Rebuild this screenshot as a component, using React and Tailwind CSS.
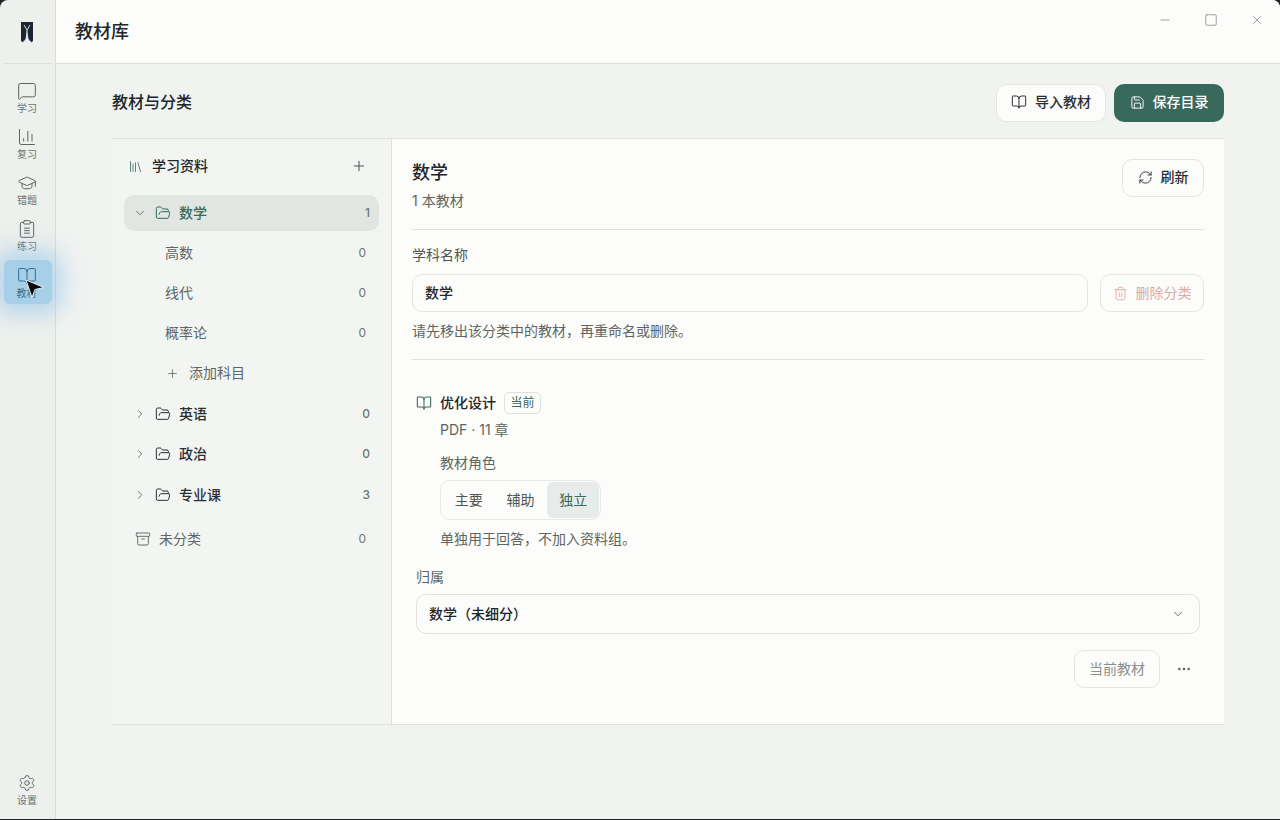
import React from 'react';
import {
  MessageSquare, ChartColumn, GraduationCap, BookOpen, Settings,
  Minus, Square, X, Save, RefreshCw, Trash2, Library, Plus, ChevronDown, ChevronRight,
  FolderOpen, Archive, Ellipsis,
} from 'lucide-react';

// lucide's clipboard icons have dots on the list lines, this one is plain
const ClipboardLines = ({ size = 20, strokeWidth = 1.2 }) => (
  <svg width={size} height={size} viewBox="0 0 24 24" fill="none" stroke="currentColor" strokeWidth={strokeWidth} strokeLinecap="round" strokeLinejoin="round">
    <rect x="8" y="2" width="8" height="4" rx="1" />
    <path d="M16 4h2a2 2 0 0 1 2 2v14a2 2 0 0 1-2 2H6a2 2 0 0 1-2-2V6a2 2 0 0 1 2-2h2" />
    <path d="M9 11h6M9 14h6M9 17h6" />
  </svg>
);

const NAV = [
  { icon: MessageSquare, label: '学习' },
  { icon: ChartColumn, label: '复习' },
  { icon: GraduationCap, label: '错题' },
  { icon: ClipboardLines, label: '练习' },
];

const NavItem = ({ icon: Icon, label }) => (
  <div className="w-12 h-11 mb-[2px] pb-[2px] pr-[1px] flex flex-col items-center justify-center text-[#5d6663]">
    <Icon size={20} strokeWidth={1.2} />
    <span className="text-[10px] leading-3 mt-[1px] text-[#6b7370]">{label}</span>
  </div>
);

const Sidebar = () => (
  <aside className="w-14 shrink-0 bg-[#eef0ed] border-r border-[#d9dcd9] flex flex-col items-center relative">
    <div className="w-[48px] h-16 border-b border-[#dfe2df] pr-[1px] flex items-center justify-center">
      <svg width="16" height="24" viewBox="0 0 16 24">
        <path d="M3 22l3-3M13 22l-3-3" stroke="#a5a5e8" strokeWidth="2" />
        <path d="M2 2h12v19l-1.500 1-3-3-1.500-9-1.500 9-3 3L2 21z" fill="#1e2530" />
        <path d="M5 5l3 5 3-5M8 10v8" stroke="#d8dadb" strokeWidth="1" fill="none" />
      </svg>
    </div>
    <nav className="pt-[12px] flex flex-col items-center">
      {NAV.map(n => <NavItem key={n.label} {...n} />)}
      <div className="relative w-12 h-11 rounded-md bg-[#a8cfe8] shadow-[0_0_22px_10px_rgba(130,190,235,0.5)] pr-[1px] flex flex-col items-center justify-center text-[#2f6f93]">
        <BookOpen size={20} strokeWidth={1.2} />
        <span className="text-[10px] leading-3 mt-[1px] self-start ml-[13px]">教材</span>
        <svg className="absolute left-[20px] top-[18px]" width="24" height="24" viewBox="0 0 24 24">
          <path d="M2 2l18 7.500-9 2-3 8z" fill="#0c0c0c" stroke="#e8f2f8" strokeWidth="1" strokeLinejoin="round" />
        </svg>
      </div>
    </nav>
    <div className="mt-auto mb-[13px] pr-[1px] flex flex-col items-center text-[#5d6663]">
      <Settings size={18} strokeWidth={1.3} />
      <span className="text-[10px] leading-3 mt-[2px] text-[#6b7370]">设置</span>
    </div>
  </aside>
);

const OutlineBtn = ({ className = '', children }) => (
  <button className={`h-[38px] flex items-center justify-center gap-2 rounded-[10px] border border-[#e4e6e3] bg-[#fcfcfa] text-sm font-medium ${className}`}>
    {children}
  </button>
);

const Count = ({ n, className = '' }) => <span className={`ml-auto text-xs text-[#6f7774] ${className}`}>{n}</span>;

const SubRow = ({ label, n }) => (
  <div className="h-10 pl-[41px] pr-[13px] flex items-center text-sm text-[#5e6663]">
    {label}
    <Count n={n} />
  </div>
);

const FolderRow = ({ label, n }) => (
  <div className="h-10 mt-[0.5px] pl-[9px] pr-[9px] flex items-center text-sm font-medium text-[#2b2f33]">
    <ChevronRight size={14} strokeWidth={1.5} className="text-[#5e6663]" />
    <FolderOpen size={16} strokeWidth={1.5} className="mx-2" />
    {label}
    <Count n={n} />
  </div>
);

const Tree = () => (
  <div className="w-[280px] shrink-0 border-r border-[#dfe1de] bg-[#f3f5f3] px-3 pt-[7px]">
    <div className="h-10 pl-[4px] pr-[12px] flex items-center text-sm font-medium text-[#22262a]">
      <Library size={15} strokeWidth={1.3} className="text-[#38695b] mr-[9px]" />
      学习资料
      <Plus size={16} strokeWidth={1.5} className="ml-auto text-[#4b5350]" />
    </div>
    <div className="mt-[9px] h-9 rounded-[10px] bg-[#e1e6e3] pl-[9px] pr-[9px] flex items-center text-sm font-medium text-[#38695b]">
      <ChevronDown size={14} strokeWidth={1.5} className="text-[#5e6663]" />
      <FolderOpen size={16} strokeWidth={1.5} className="mx-2" />
      数学
      <Count n={1} />
    </div>
    <div className="mt-[2px]">
      <SubRow label="高数" n={0} />
      <SubRow label="线代" n={0} />
      <SubRow label="概率论" n={0} />
      <div className="h-10 pl-[42px] flex items-center gap-[10px] text-sm text-[#5e6663]">
        <Plus size={13} strokeWidth={1.5} />
        添加科目
      </div>
    </div>
    <FolderRow label="英语" n={0} />
    <FolderRow label="政治" n={0} />
    <FolderRow label="专业课" n={3} />
    <div className="h-10 mt-[4px] pl-[11px] pr-[13px] flex items-center text-sm text-[#5e6663]">
      <Archive size={16} strokeWidth={1.4} className="mr-[8px]" />
      未分类
      <Count n={0} />
    </div>
  </div>
);

const Detail = () => (
  <div className="flex-1 bg-[#fcfcfa] px-5 pt-[20px]">
    <div className="flex justify-between items-start h-[71px] border-b border-[#dfe1de]">
      <div className="pt-[2px]">
        <h3 className="text-lg leading-6 font-medium text-[#22262a]">数学</h3>
        <p className="mt-[7px] text-sm leading-[18px] text-[#5e6663]">1 本教材</p>
      </div>
      <OutlineBtn className="w-[82px] pb-[2px] text-[#2b2f33]">
        <RefreshCw size={15} strokeWidth={1.5} /> 刷新
      </OutlineBtn>
    </div>

    <div className="border-b border-[#dfe1de] h-[130px] pt-[15px]">
      <label className="block text-sm leading-5 text-[#4f5754]">学科名称</label>
      <div className="mt-[9px] flex gap-3">
        <div className="flex-1 h-[38px] rounded-[10px] border border-[#e4e6e3] px-3 flex items-center text-sm font-medium text-[#22262a]">数学</div>
        <OutlineBtn className="w-[104px] text-[#dba9a6] font-normal">
          <Trash2 size={15} strokeWidth={1.4} /> 删除分类
        </OutlineBtn>
      </div>
      <p className="mt-[10px] text-sm leading-[18px] text-[#5e6663]">请先移出该分类中的教材，再重命名或删除。</p>
    </div>

    <div className="pt-[31px] px-1">
      <div className="flex items-center h-6">
        <BookOpen size={16} strokeWidth={1.6} className="text-[#38695b] mr-[8px]" />
        <span className="text-sm font-medium text-[#22262a]">优化设计</span>
        <span className="ml-[8px] h-[22px] w-[37px] rounded-[5px] border border-[#dfe1de] text-xs text-[#38695b] flex items-center justify-center">当前</span>
      </div>
      <div className="pl-6">
        <p className="mt-[5px] text-sm leading-[20px] text-[#5e6663]">PDF · 11 章</p>
        <p className="mt-[13px] text-sm leading-5 text-[#5e6663]">教材角色</p>
        <div className="mt-[7px] w-[161px] h-10 rounded-[10px] border border-[#e7e9e6] p-[1px] flex text-sm text-[#4f5754]">
          <span className="w-[52px] flex items-center justify-center ml-[1px]">主要</span>
          <span className="w-[52px] flex items-center justify-center">辅助</span>
          <span className="w-[52px] ml-[1px] rounded-md bg-[#e7ecea] text-[#38695b] flex items-center justify-center">独立</span>
        </div>
        <p className="mt-[9px] text-sm leading-5 text-[#5e6663]">单独用于回答，不加入资料组。</p>
      </div>
      <p className="mt-[18px] text-sm leading-5 text-[#5e6663]">归属</p>
      <div className="mt-[7px] h-10 rounded-[10px] border border-[#e1e3e0] pl-3 pr-[14px] flex items-center justify-between text-sm font-medium text-[#22262a]">
        数学（未细分）
        <ChevronDown size={14} strokeWidth={1.5} className="text-[#4f5754]" />
      </div>
      <div className="mt-[16px] flex justify-end items-center">
        <OutlineBtn className="w-[86px] text-[#8a908d] font-normal">当前教材</OutlineBtn>
        <Ellipsis size={16} strokeWidth={1.6} className="ml-[16px] mr-2 text-[#4f5754]" />
      </div>
    </div>
  </div>
);

const App = () => (
  <div className="w-[1280px] h-[820px] overflow-hidden bg-[#20242a] font-['Inter','Noto_Sans_CJK_SC',sans-serif]">
    <div className="h-[819px] rounded-t-[8px] overflow-hidden flex relative">
      <Sidebar />
      <div className="flex-1 flex flex-col bg-[#f1f3f1]">
        <header className="h-16 shrink-0 bg-[#fcfcfa] border-b border-[#dbdedb] pl-[19px] pr-[16px] flex items-center justify-between">
          <h1 className="text-lg font-medium text-[#22262a]">教材库</h1>
          <div className="self-start pt-[13px] flex items-center gap-[32px] text-[#60676a]">
            <Minus size={14} strokeWidth={1} />
            <Square size={14} strokeWidth={1} />
            <X size={14} strokeWidth={1} />
          </div>
        </header>
        <main className="flex-1 px-14 pt-[20px]">
          <div className="flex items-center justify-between h-[38px] mb-4">
            <h2 className="pb-[2px] text-base font-medium text-[#22262a]">教材与分类</h2>
            <div className="flex gap-2">
              <OutlineBtn className="w-[110px] pb-[2px] text-[#2b2f33]">
                <BookOpen size={16} strokeWidth={1.5} /> 导入教材
              </OutlineBtn>
              <button className="w-[110px] h-[38px] pb-[2px] flex items-center justify-center gap-2 rounded-[10px] bg-[#38695b] text-white text-sm font-medium">
                <Save size={15} strokeWidth={1.5} /> 保存目录
              </button>
            </div>
          </div>
          <section className="h-[587px] flex border-y border-[#dfe1de]">
            <Tree />
            <Detail />
          </section>
        </main>
      </div>
    </div>
  </div>
);

export default App;
